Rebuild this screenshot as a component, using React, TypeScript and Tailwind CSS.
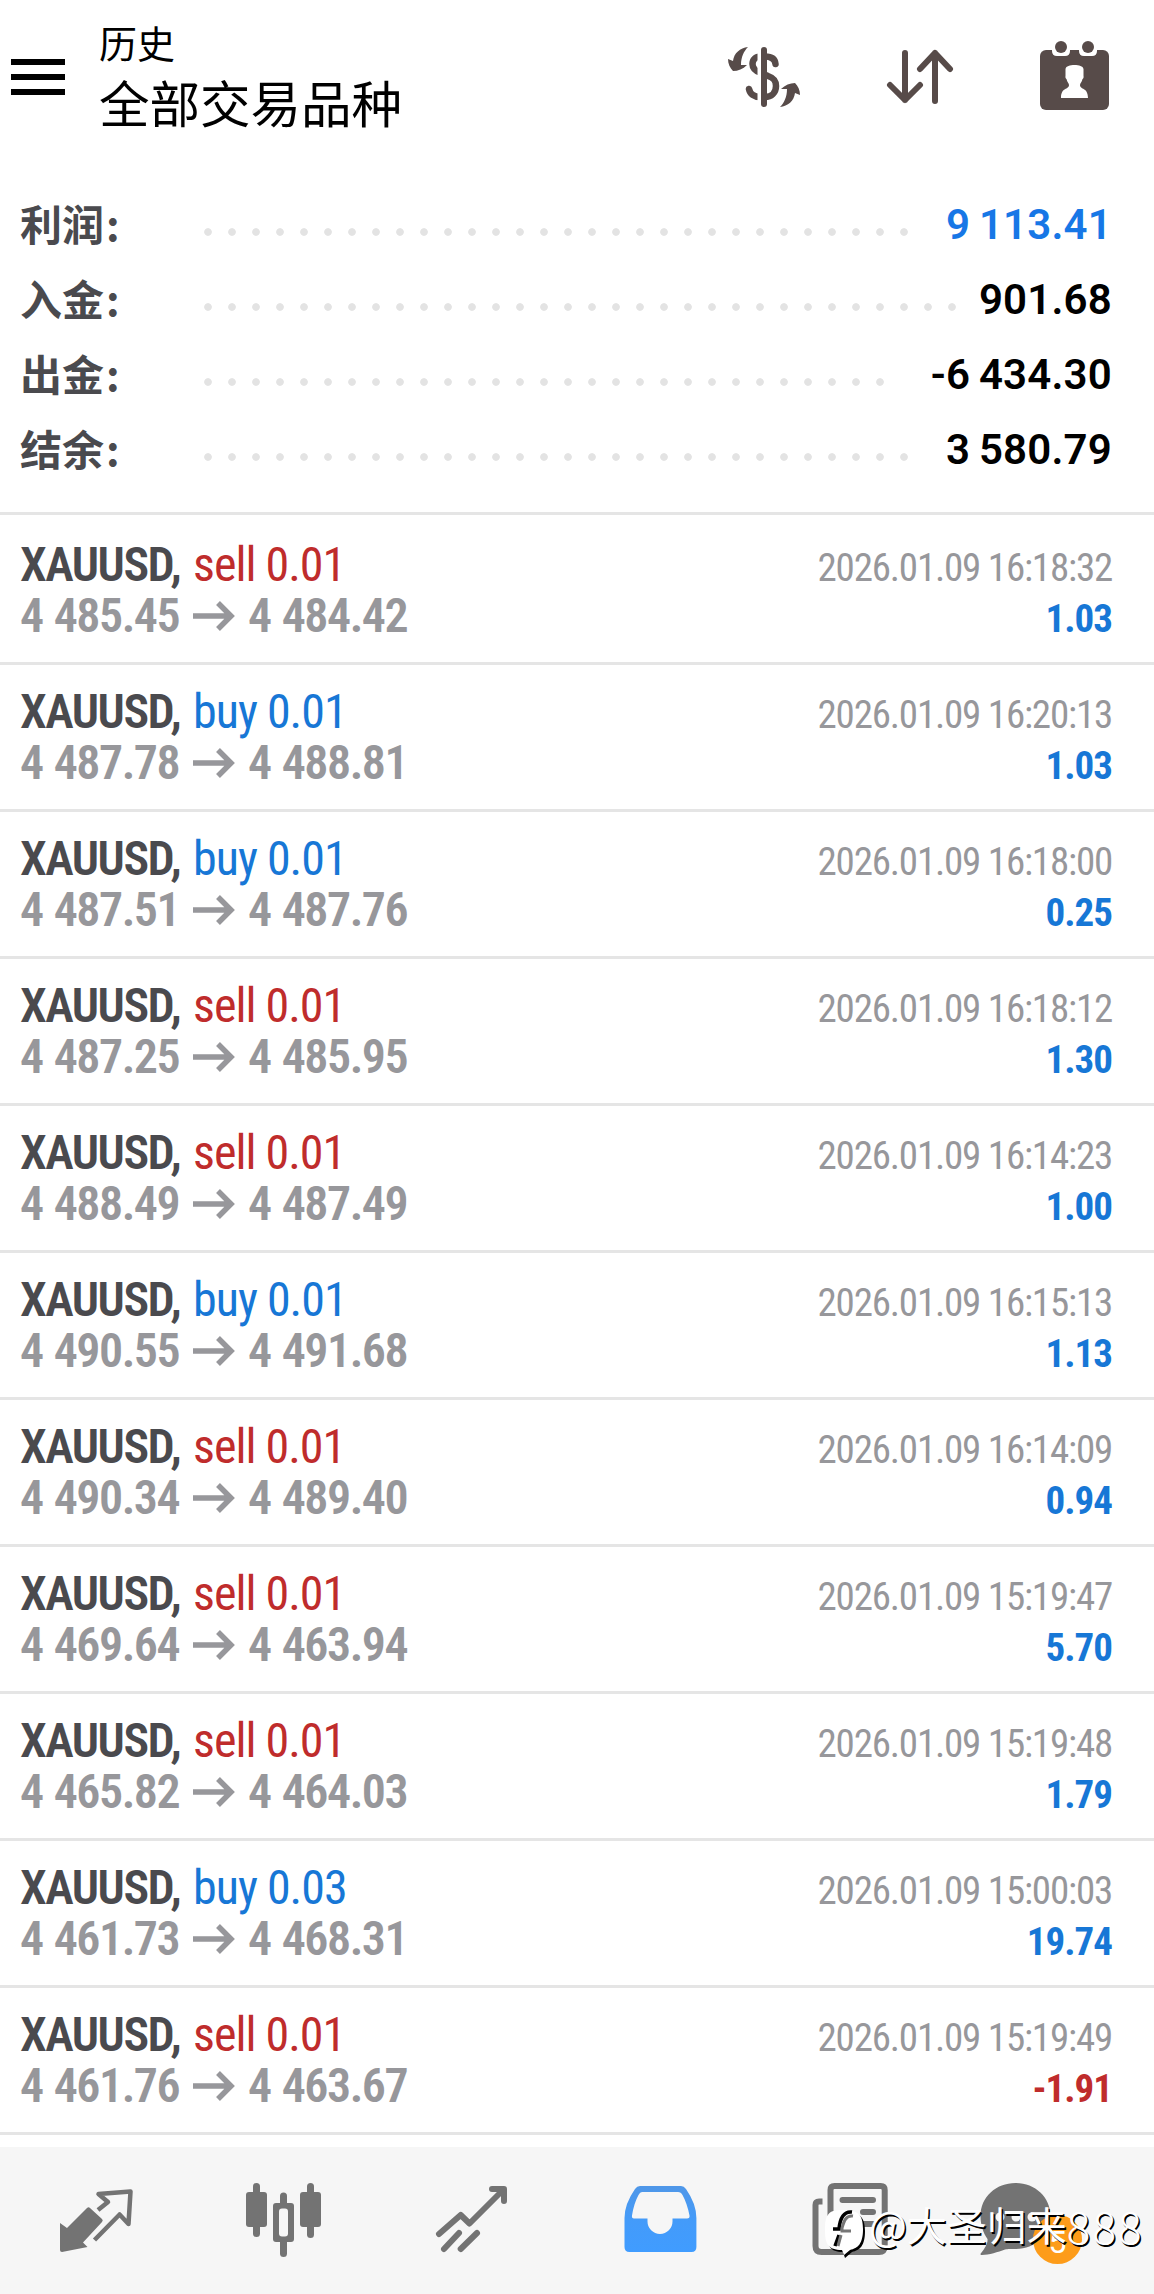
type Deal = {
  side: "sell" | "buy";
  volume: string;
  open: string;
  close: string;
  time: string;
  profit: string;
};

const summary = [
  { label: "利润", value: "9 113.41", dots: 30, positive: true },
  { label: "入金", value: "901.68", dots: 32 },
  { label: "出金", value: "-6 434.30", dots: 29 },
  { label: "结余", value: "3 580.79", dots: 30 },
];

const deals: Deal[] = [
  { side: "sell", volume: "0.01", open: "4 485.45", close: "4 484.42", time: "2026.01.09 16:18:32", profit: "1.03" },
  { side: "buy", volume: "0.01", open: "4 487.78", close: "4 488.81", time: "2026.01.09 16:20:13", profit: "1.03" },
  { side: "buy", volume: "0.01", open: "4 487.51", close: "4 487.76", time: "2026.01.09 16:18:00", profit: "0.25" },
  { side: "sell", volume: "0.01", open: "4 487.25", close: "4 485.95", time: "2026.01.09 16:18:12", profit: "1.30" },
  { side: "sell", volume: "0.01", open: "4 488.49", close: "4 487.49", time: "2026.01.09 16:14:23", profit: "1.00" },
  { side: "buy", volume: "0.01", open: "4 490.55", close: "4 491.68", time: "2026.01.09 16:15:13", profit: "1.13" },
  { side: "sell", volume: "0.01", open: "4 490.34", close: "4 489.40", time: "2026.01.09 16:14:09", profit: "0.94" },
  { side: "sell", volume: "0.01", open: "4 469.64", close: "4 463.94", time: "2026.01.09 15:19:47", profit: "5.70" },
  { side: "sell", volume: "0.01", open: "4 465.82", close: "4 464.03", time: "2026.01.09 15:19:48", profit: "1.79" },
  { side: "buy", volume: "0.03", open: "4 461.73", close: "4 468.31", time: "2026.01.09 15:00:03", profit: "19.74" },
  { side: "sell", volume: "0.01", open: "4 461.76", close: "4 463.67", time: "2026.01.09 15:19:49", profit: "-1.91" },
];

function MenuIcon() {
  return (
    <svg width="54" height="36" viewBox="0 0 54 36" fill="#000">
      <rect width="54" height="6" />
      <rect y="15" width="54" height="6" />
      <rect y="30" width="54" height="6" />
    </svg>
  );
}

function CurrencyIcon() {
  const arrow =
    "M28 7C20 8 14 13 13 21L8 19C8 24 10 28 13 31C18 31 23 29 27 25L21 25C21 17 24 11 28 7Z";
  return (
    <svg width="88" height="74" viewBox="0 0 88 74" fill="none">
      <path
        d="M55.500 24C55 19 51 16.500 45 16.500H41C35 16.500 32.500 20 32.500 24C32.500 28 35 31 41 33L48 36C54 38 56 41 56 46C56 53 51 57 45 57H40C34 57 30 54 29 49"
        stroke="#574b49"
        strokeWidth="6.5"
        strokeLinecap="round"
      />
      <path d="M39.5 8V66" stroke="#fff" strokeWidth="4" />
      <path d="M44 10V64" stroke="#574b49" strokeWidth="6" strokeLinecap="round" />
      <path d={arrow} fill="#574b49" />
      <path d={arrow} fill="#574b49" transform="rotate(180 44 37)" />
    </svg>
  );
}

function SortIcon() {
  return (
    <svg
      width="68"
      height="60"
      viewBox="0 0 68 60"
      fill="none"
      stroke="#574b49"
      strokeWidth="6"
      strokeLinecap="round"
      strokeLinejoin="round"
    >
      <path d="M19 6V53M4 38L19 53L34 38" />
      <path d="M49 54V6M34 22L49 6L64 22" />
    </svg>
  );
}

function CalendarIcon() {
  return (
    <svg width="70" height="72" viewBox="0 0 70 72">
      <rect x="0" y="11" width="69" height="60" rx="6" fill="#574b49" />
      <path
        d="M12 8H30V12Q30 17 25 17H17Q12 17 12 12ZM39 8H57V12Q57 17 52 17H44Q39 17 39 12Z"
        fill="#fff"
      />
      <circle cx="21" cy="8" r="6" fill="#574b49" />
      <circle cx="48" cy="8" r="6" fill="#574b49" />
      <path
        d="M34.5 26C39 26 43 27 43.5 30V37C44 38 43 40 42.500 40C42 43 40 44 40 46C40 51 48 48 48 59H21C21 48 29 51 29 46C29 44 27 43 26.500 40C26 40 25 38 25.500 37V30C26 27 30 26 34.500 26Z"
        fill="#fff"
      />
    </svg>
  );
}

function PriceArrow() {
  return (
    <svg width="42" height="30" viewBox="0 0 42 30" fill="none" stroke="#97979b" strokeWidth="5.5">
      <path d="M0 15H38M25 2L38 15L25 28" />
    </svg>
  );
}

function QuotesIcon() {
  return (
    <svg width="80" height="80" viewBox="0 0 80 80">
      <path
        d="M42 30L52 22L42.500 14L74.500 11.500L72.500 44L63.600 34.500L38.500 60"
        fill="none"
        stroke="#737373"
        strokeWidth="4.5"
        strokeLinejoin="round"
      />
      <path
        d="M4 43L11 48L31 28Q32.600 26.500 34 28L46 39Q47.500 40.500 46 42L27 62.500L31.500 67L6 72Q4 72 4 70Z"
        fill="#737373"
      />
    </svg>
  );
}

function ChartIcon() {
  return (
    <svg width="88" height="80" viewBox="0 0 88 80" fill="#737373">
      <rect x="6" y="12" width="21" height="35" rx="3" />
      <rect x="13" y="3" width="7" height="54" rx="3.5" />
      <rect x="60" y="12" width="21" height="35" rx="3" />
      <rect x="67" y="3" width="7" height="55" rx="3.5" />
      <rect x="40" y="12.500" width="7" height="64.500" rx="3.5" />
      <rect x="33" y="23" width="21" height="39" rx="3" />
      <rect x="39" y="28.500" width="9" height="28" rx="3" fill="#f6f6f6" />
    </svg>
  );
}

function TradeIcon() {
  return (
    <svg
      width="80"
      height="80"
      viewBox="0 0 80 80"
      fill="none"
      stroke="#737373"
      strokeWidth="6"
      strokeLinecap="round"
      strokeLinejoin="round"
    >
      <path d="M7 54L28.700 35L37.500 43.500L71 10" />
      <path d="M60 9H72V21" />
      <path d="M12 69L27 53M28.700 69L45 53" />
    </svg>
  );
}

function HistoryIcon() {
  return (
    <svg width="80" height="80" viewBox="0 0 80 80">
      <defs>
        <linearGradient id="tray" x1="0" y1="0" x2="0" y2="1">
          <stop offset="0" stopColor="#4f97e8" />
          <stop offset="0.55" stopColor="#439bfa" />
          <stop offset="1" stopColor="#409cff" />
        </linearGradient>
      </defs>
      <path
        d="M20 6H61Q64 6 66 9Q76.400 24 76.400 38V67Q76.400 72 71.500 72H9.500Q4.500 72 4.500 67V38Q4.500 24 15 9Q17 6 20 6Z"
        fill="url(#tray)"
      />
      <path
        d="M22 12H58Q61 12 62.500 15Q67 23 69.500 35.500Q70 38.500 67 38.500H52.500V41.500A12.500 12.500 0 0 1 27.500 41.500V38.500H14Q11.500 38.500 12 35.500Q14 23 18.500 15Q20 12 22 12Z"
        fill="#f6f6f6"
      />
    </svg>
  );
}

function NewsIcon() {
  return (
    <svg width="88" height="80" viewBox="0 0 88 80" fill="none" stroke="#737373" strokeWidth="6">
      <path d="M14.500 21.500H11Q7.500 21.500 7.500 25V66Q7.500 72 13.500 72H71Q76.700 72 76.700 66V10Q76.700 6 72.700 6H26.500Q22.500 6 22.500 10V58" />
      <path d="M34.500 20H65M55 32H65M55 44H65" strokeLinecap="round" />
    </svg>
  );
}

function MessagesIcon() {
  return (
    <svg width="88" height="80" viewBox="0 0 88 80">
      <path
        d="M39.500 3C59 3 74.500 17 74.500 36C74.500 55 59 69 39.500 69C34 69 32 69 29 69.500C22 72 13 75 6 75C4 75 4 74 5.500 72.500C9 68 12 63 11.500 59C7 53 4.500 44 4.500 36C4.500 17 20 3 39.500 3Z"
        fill="#737373"
      />
      <circle cx="24" cy="37" r="4.500" fill="#f6f6f6" />
      <circle cx="40" cy="37" r="4.500" fill="#f6f6f6" />
      <circle cx="56" cy="37" r="4.500" fill="#f6f6f6" />
    </svg>
  );
}

function WatermarkLogo() {
  return (
    <svg width="44" height="50" viewBox="0 0 44 50">
      <path
        d="M20 3C36 3 42 7 42 22C42 37 37 41 29 43L22 49L20 43C7 43 4 37 4 23C4 8 7 3 20 3Z"
        fill="#000"
      />
      <path
        d="M19 1C35 1 40 5 40 20C40 35 35 39 27 41L21 46L19 41C5 41 2 35 2 21C2 6 5 1 19 1Z"
        fill="#fff"
      />
      <path
        d="M29 3C21 2 17 9 16 20H10M16 26L12 37"
        fill="none"
        stroke="#000"
        strokeWidth="3.500"
      />
      <path
        d="M30 7C23 6 21 12 19 19V22H28M18 26L15 37"
        fill="none"
        stroke="#777"
        strokeWidth="3"
      />
    </svg>
  );
}

function DealRow({ deal }: { deal: Deal }) {
  return (
    <li className="flex h-[147px] justify-between border-b-[3px] border-[#e5e5e5] pt-[21px] pr-[42px] pl-5">
      <div className="text-[48px] leading-[51px] font-semibold">
        <p className="flex items-baseline">
          <span className="w-[173px] tracking-[-1.5px] text-[#4a4a4e]">XAUUSD,</span>
          <span
            className={
              deal.side === "buy"
                ? "font-normal tracking-[-1px] text-[#1777d6]"
                : "font-normal tracking-[-1px] text-[#bf2c2c]"
            }
          >
            {deal.side} {deal.volume}
          </span>
        </p>
        <p className="flex items-center tracking-[-1.5px] text-[#97979b] [word-spacing:1.5px]">
          <span className="w-[173px]">{deal.open}</span>
          <PriceArrow />
          <span className="ml-[13px]">{deal.close}</span>
        </p>
      </div>
      <div className="pt-1 text-right text-[39px] leading-[51px]">
        <p className="tracking-[-1.2px] text-[#97979b]">{deal.time}</p>
        <p
          className={
            deal.profit.startsWith("-")
              ? "font-bold tracking-[-1px] text-[#bf2c2c]"
              : "font-bold tracking-[-1px] text-[#1777d6]"
          }
        >
          {deal.profit}
        </p>
      </div>
    </li>
  );
}

export default function App() {
  return (
    <main className="flex h-[2294px] w-[1154px] flex-col overflow-hidden bg-white font-['Roboto_Condensed','Noto_Sans_CJK_SC',sans-serif]">
      <header className="flex h-[180px] items-start pl-[11px]">
        <div className="pt-[59px]">
          <MenuIcon />
        </div>
        <div className="ml-[34px] pt-[15px] font-['Noto_Sans_CJK_SC',sans-serif] text-black">
          <p className="text-[38px] leading-[54px]">历史</p>
          <h1 className="-mt-px text-[50.5px] leading-[66px]">全部交易品种</h1>
        </div>
        <div className="ml-auto flex items-start pr-[44px]">
          <div className="pt-10">
            <CurrencyIcon />
          </div>
          <div className="ml-[78px] pt-[47px]">
            <SortIcon />
          </div>
          <div className="ml-[86px] pt-[39px]">
            <CalendarIcon />
          </div>
        </div>
      </header>

      <section className="flex h-[335px] flex-col border-b-[3px] border-[#e5e5e5] pt-[7px] pr-[42px] pl-5">
        {summary.map((row) => (
          <div key={row.label} className="flex h-[75px] items-center">
            <span className="-mt-[5px] w-44 font-['Noto_Sans_CJK_SC',sans-serif] text-[42px] font-bold text-[#4a4a4e]">
              {row.label}
              <span className="ml-0.5">:</span>
            </span>
            <span
              className="mt-[15px] h-6 bg-[radial-gradient(circle,#e3e3e3_3.4px,transparent_4.2px)] bg-[size:24px_24px]"
              style={{ width: row.dots * 24 }}
            />
            <span
              className={
                row.positive
                  ? "ml-auto font-['Roboto',sans-serif] text-[42px] font-semibold tracking-[0.2px] text-[#1777e6] [word-spacing:-2px]"
                  : "ml-auto font-['Roboto',sans-serif] text-[42px] font-semibold tracking-[0.2px] text-black [word-spacing:-2px]"
              }
            >
              {row.value}
            </span>
          </div>
        ))}
      </section>

      <ul className="pt-[3px]">
        {deals.map((deal) => (
          <DealRow key={deal.time} deal={deal} />
        ))}
      </ul>

      <nav className="relative mt-auto flex h-[147px] items-start bg-[#f6f6f6] pt-[33px] pl-14">
        <QuotesIcon />
        <div className="ml-[104px]">
          <ChartIcon />
        </div>
        <div className="ml-[104px]">
          <TradeIcon />
        </div>
        <div className="ml-[108px]">
          <HistoryIcon />
        </div>
        <div className="ml-[108px]">
          <NewsIcon />
        </div>
        <div className="relative ml-[80px]">
          <MessagesIcon />
          <span className="absolute top-[35px] left-[57px] flex size-[49px] items-center justify-center rounded-full bg-[#fd9c1a] pt-1 font-['Roboto',sans-serif] text-[32px] text-white">
            5
          </span>
        </div>
        <div className="absolute top-[62px] left-[823px] flex items-start whitespace-nowrap font-['Noto_Sans_CJK_SC',sans-serif] text-white [text-shadow:1.5px_1.5px_0.5px_#000]">
          <WatermarkLogo />
          <span className="-mt-[7px] ml-0.5 text-[40px] leading-[44px]">@大圣归来</span>
          <span className="-mt-[6px] text-[44px] leading-[44px] font-light tracking-[2px]">888</span>
        </div>
      </nav>
    </main>
  );
}
